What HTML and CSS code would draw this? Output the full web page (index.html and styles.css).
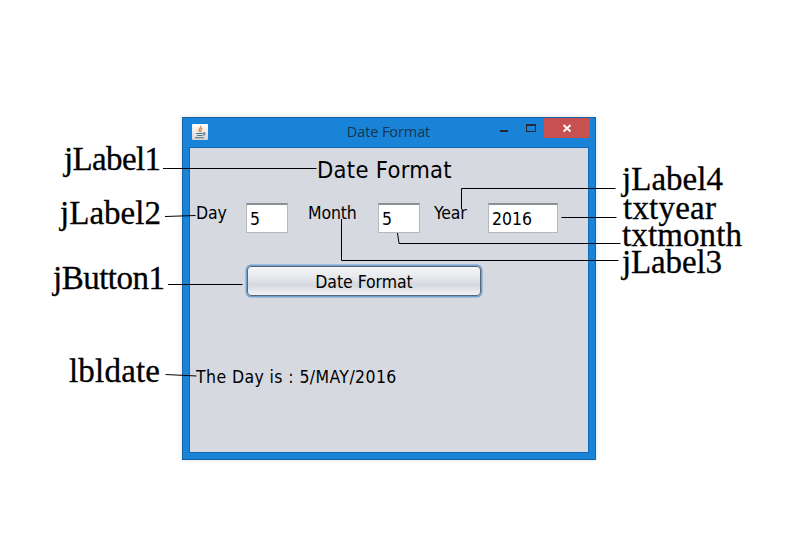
FILE: index.html
```html
<!DOCTYPE html>
<html lang="en">
<head>
<meta charset="utf-8">
<title>Date Format</title>
<link rel="stylesheet" href="styles.css">
</head>
<body>
<main class="window">
  <header class="titlebar">
    <svg class="app-icon" width="16" height="16" viewBox="0 0 16 16">
      <defs><linearGradient id="tile" x2="0" y2="1"><stop stop-color="#fff"/><stop offset="1" stop-color="#d4d4d4"/></linearGradient></defs>
      <rect width="16" height="16" rx="1" fill="url(#tile)"/>
      <path d="M8.500 2C10 4 5.500 5 7.500 8M10.500 4C8 5.500 9.500 6.500 8.500 8" fill="none" stroke="#ef7d22" stroke-width="1.300"/>
      <path d="M4 9.500h7M5 11.500h5.500M3 13.700h9M11 9c3-.8 2.500 2 0 2.300" fill="none" stroke="#4b7795" stroke-width="1.100"/>
    </svg>
    <span class="title">Date Format</span>
    <svg class="controls" width="94" height="20" viewBox="0 0 94 20">
      <path d="M4 12h8v2H4z" fill="#222b35"/>
      <path d="M30 6h10v8H30zM31 8v5h8V8z" fill="#222b35" fill-rule="evenodd"/>
      <path d="M48 0h46v20H48z" fill="#c75050"/>
      <path d="M67.500 7l7 6.500M74.500 7l-7 6.500" stroke="#fff" stroke-width="1.800"/>
    </svg>
  </header>
  <section class="panel">
    <h1 class="heading">Date Format</h1>
    <div class="fields">
      <label class="day">Day</label><span class="input">5</span>
      <label class="month">Month</label><span class="input">5</span>
      <label class="year">Year</label><span class="input wide">2016</span>
    </div>
    <button class="button">Date Format</button>
    <p class="result">The Day is : 5/MAY/2016</p>
  </section>
</main>
<svg class="annotations" width="801" height="554" viewBox="0 0 801 554">
  <g class="lines">
    <path d="M163 168.500H316.500M168 284.500H242.500M461.500 209V188.500H615.500M561.500 217.500H616.500M341.500 219V260.500H618.500M397.500 233L399 243.500H620.500"/>
    <path d="M165 216.500L195.500 215.500M165.500 374.500L196.500 376"/>
  </g>
  <g class="names">
    <text x="64" y="170" textLength="97">jLabel1</text>
    <text x="60" y="224" textLength="101">jLabel2</text>
    <text x="53" y="289" textLength="112">jButton1</text>
    <text x="69" y="382" textLength="91">lbldate</text>
    <text x="622" y="190" textLength="101">jLabel4</text>
    <text x="623" y="219" textLength="93">txtyear</text>
    <text x="622" y="246" textLength="120">txtmonth</text>
    <text x="622" y="273" textLength="100">jLabel3</text>
  </g>
</svg>
</body>
</html>
```

FILE: styles.css
```css
* { box-sizing: border-box; }
body {
  margin: 0;
  padding: 117px 0 0 182px;
  width: 801px;
  height: 554px;
  overflow: hidden;
  background: #fff;
  color: #000;
  font-family: "DejaVu Sans Condensed", "DejaVu Sans", sans-serif;
  font-stretch: condensed;
}
.window {
  width: 414px;
  height: 343px;
  padding: 0 6px 6px;
  border: 1px solid #1462a5;
  background: #1883d7;
  box-shadow: 0 0 5px rgba(0, 0, 0, .12);
}
.titlebar {
  display: flex;
  height: 29px;
  align-items: flex-start;
  padding-left: 3px;
  margin-right: -1px;
}
.app-icon { margin-top: 6px; }
.title {
  flex: 1;
  padding: 5px 0 0 73px;
  text-align: center;
  color: #18354e;
  font: 14.500px/18px "Open Sans", "Noto Sans", sans-serif;
  letter-spacing: -.1px;
}
.controls { flex: none; }
.panel {
  height: 306px;
  border: 1px solid #1269b3;
  background: #d6d9e0;
}
.heading {
  margin: 0;
  padding-top: 8px;
  height: 55px;
  padding-right: 9px;
  text-align: center;
  font-size: 23.500px;
  font-weight: 400;
  line-height: 28px;
  letter-spacing: .3px;
}
.fields {
  display: flex;
  height: 30px;
  padding-left: 6px;
  font-size: 17.500px;
}
.fields label { line-height: 20px; letter-spacing: -.15px; }
.day { width: 50px; }
.month { width: 70px; margin-left: 20px; }
.year { width: 54px; margin-left: 14px; }
.input {
  width: 42px;
  height: 30px;
  padding-left: 3px;
  border: 1px solid #b5b8bd;
  border-top: 2px solid #8d8f94;
  background: #fff;
  line-height: 28px;
}
.wide { width: 70px; }
.button {
  display: block;
  width: 234px;
  height: 30px;
  margin: 33px 0 0 57px;
  padding: 1px 0 0;
  border: 1px solid #56657a;
  border-radius: 4px;
  background: linear-gradient(#f7f7f9, #e2e4e9 45%, #d5d8df 65%, #f2f4f8);
  box-shadow: 0 0 0 1.500px #73a4d1;
  color: #000;
  font: inherit;
  font-size: 17.500px;
  letter-spacing: -.05px;
}
.result {
  margin: 71px 0 0 6px;
  font-size: 17.500px;
  line-height: 20px;
  letter-spacing: .4px;
}
.annotations { position: absolute; left: 0; top: 0; }
.lines { fill: none; stroke: #000; stroke-width: 1; }
.names { font-family: "Liberation Serif", serif; font-size: 33px; stroke: #000; stroke-width: .3px; }
```
